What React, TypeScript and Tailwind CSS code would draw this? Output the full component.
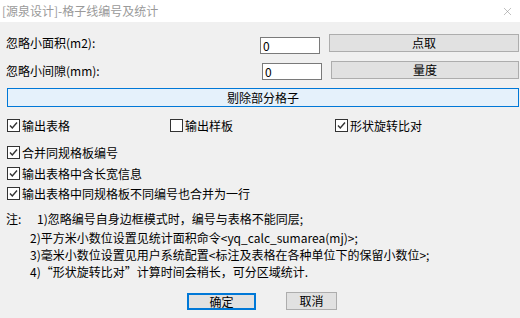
import { X } from 'lucide-react';

const Check = ({ on }: { on: boolean }) => (
  <span className="w-[13px] h-[13px] border border-[#333333] bg-white flex items-center justify-center shrink-0">
    {on && (
      <svg width="11" height="11" viewBox="0 0 11 11">
        <path d="M2 5.5 L4.3 8 L9 2.5" stroke="#333333" strokeWidth="1.4" fill="none" />
      </svg>
    )}
  </span>
);

const CheckItem = ({ on, label, className = '' }: { on: boolean; label: string; className?: string }) => (
  <div className={`flex items-center gap-[2px] h-[13px] ${className}`}>
    <Check on={on} />
    <span className="leading-[13px]">{label}</span>
  </div>
);

const App = () => {
  return (
    <div className="w-[520px] h-[318px] overflow-hidden bg-[#f0f0f0] text-[12px] text-black font-['Noto_Sans_CJK_SC','Microsoft_YaHei',sans-serif]">
      {/* title bar */}
      <div className="h-[22px] bg-white flex items-center justify-between pl-[2px] pr-[6px]">
        <span className="text-[#9a9a9a] leading-[22px]">[源泉设计]-格子线编号及统计</span>
        <X size={13} strokeWidth={1} className="text-[#8a8a8a]" />
      </div>

      <div className="pt-[12px]">
        {/* row 1 */}
        <div className="flex h-[18px]">
          <div className="w-[260px] pl-[6px] flex items-center">忽略小面积(m2):</div>
          <div className="mt-[3px] w-[60px] h-[17px] bg-white border border-[#7a7a7a] pl-[2px] leading-[15px]">0</div>
          <button className="ml-[9px] w-[190px] h-[18px] bg-[#e1e1e1] border border-[#adadad] leading-[16px]">点取</button>
        </div>

        {/* row 2 */}
        <div className="flex h-[19px] mt-[9px]">
          <div className="w-[262px] pl-[6px] flex items-center">忽略小间隙(mm):</div>
          <div className="mt-[2px] w-[60px] h-[17px] bg-white border border-[#7a7a7a] pl-[2px] leading-[15px]">0</div>
          <button className="ml-[9px] w-[188px] h-[18px] bg-[#e1e1e1] border border-[#adadad] leading-[16px]">量度</button>
        </div>

        <button className="block mt-[8px] ml-[7px] w-[512px] h-[19px] bg-[#e5f1fb] border border-[#0078d7] leading-[17px]">
          剔除部分格子
        </button>

        {/* checkboxes */}
        <div className="flex mt-[12px] pl-[7px]">
          <CheckItem on label="输出表格" className="w-[163px]" />
          <CheckItem on={false} label="输出样板" className="w-[165px]" />
          <CheckItem on label="形状旋转比对" />
        </div>
        <div className="pl-[7px]">
          <CheckItem on label="合并同规格板编号" className="mt-[14px]" />
          <CheckItem on label="输出表格中含长宽信息" className="mt-[8px]" />
          <CheckItem on label="输出表格中同规格板不同编号也合并为一行" className="mt-[7px]" />
        </div>

        {/* notes */}
        <div className="mt-[10px] leading-[17px]">
          <div className="flex h-[17px] pl-[6px]">
            <span className="w-[31px]">注:</span>
            <span>1)忽略编号自身边框模式时，编号与表格不能同层;</span>
          </div>
          <div className="h-[17px] mt-[2px] pl-[30px]">2)平方米小数位设置见统计面积命令&lt;yq_calc_sumarea(mj)&gt;;</div>
          <div className="h-[17px] pl-[30px]">3)毫米小数位设置见用户系统配置&lt;标注及表格在各种单位下的保留小数位&gt;;</div>
          <div className="h-[17px] pl-[30px]">4)“形状旋转比对”计算时间会稍长，可分区域统计.</div>
        </div>

        {/* dialog buttons */}
        <div className="flex mt-[12px] pl-[187px] gap-[30px] items-center">
          <button className="w-[69px] h-[17px] bg-[#e1e1e1] border-2 border-[#0078d7] leading-[13px]">确定</button>
          <button className="w-[51px] h-[18px] bg-[#e1e1e1] border border-[#adadad] leading-[16px]">取消</button>
        </div>
      </div>
    </div>
  );
};

export default App;
